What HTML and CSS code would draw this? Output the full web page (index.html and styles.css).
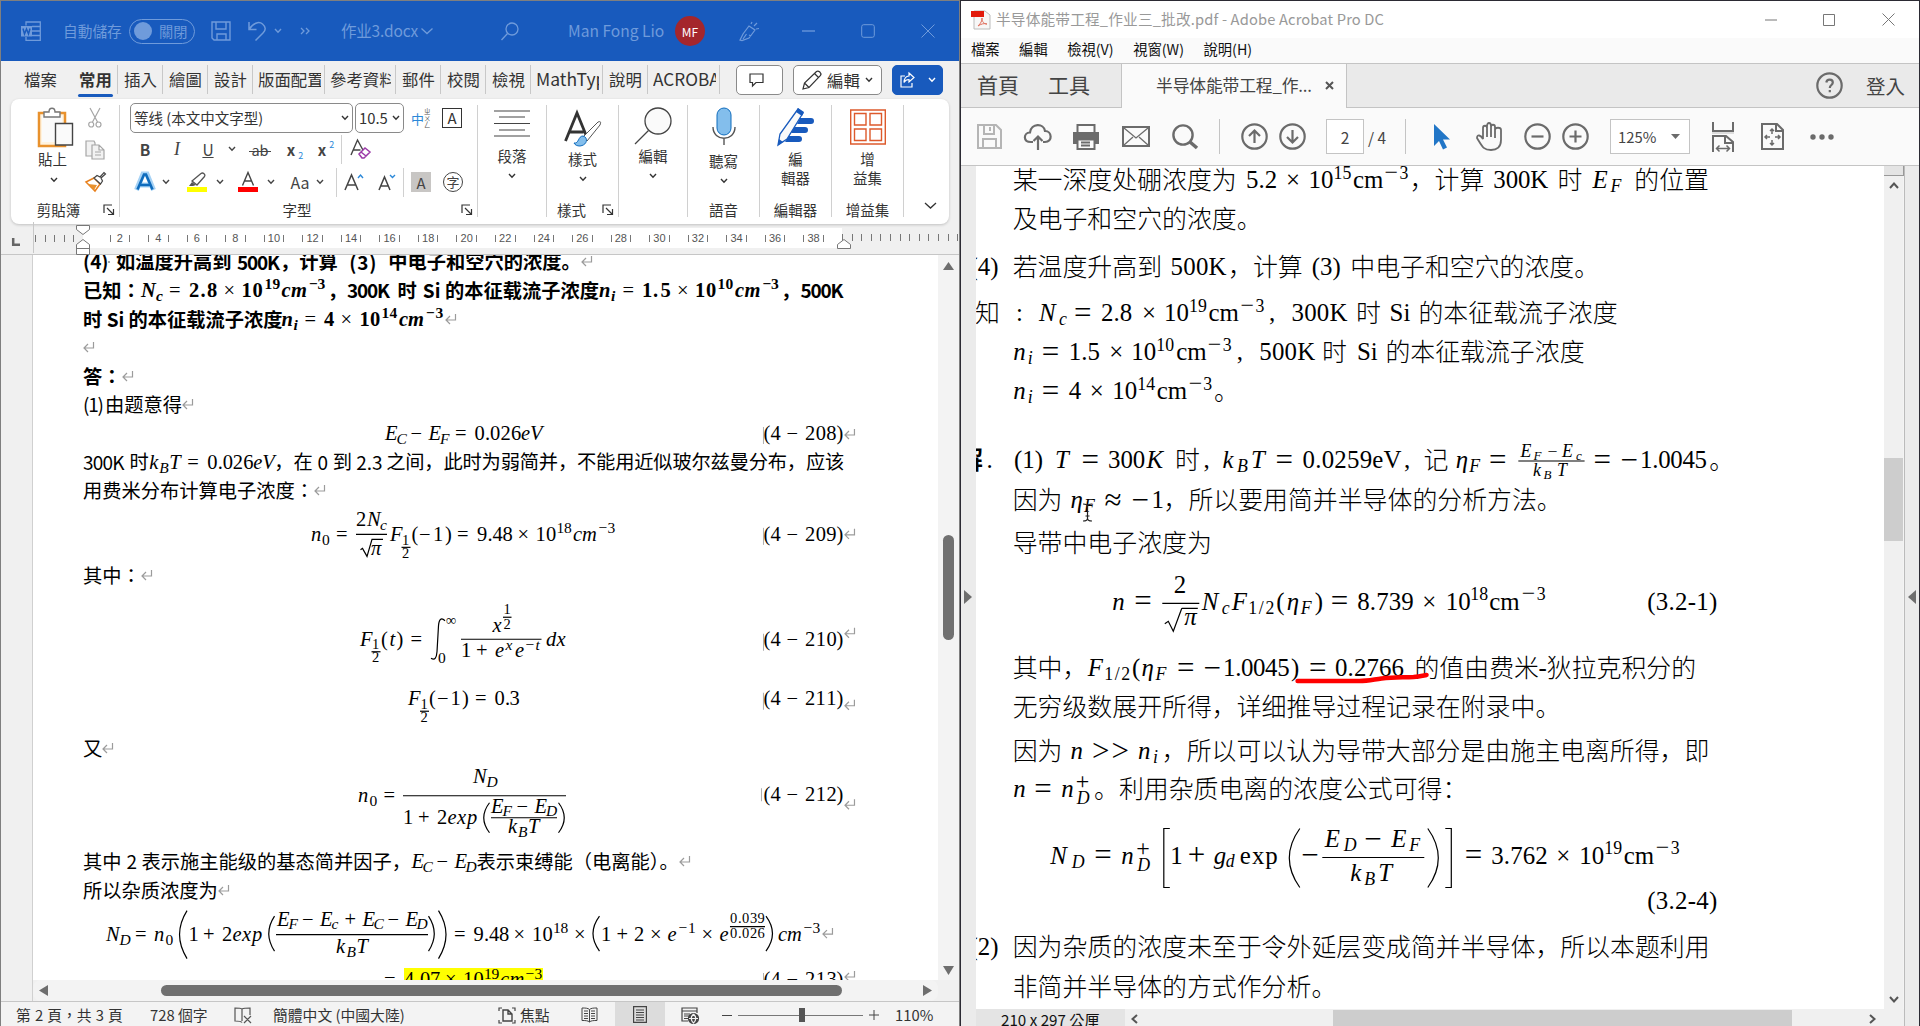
FILE: index.html
```html
<!DOCTYPE html>
<html lang="zh-Hant">
<head>
<meta charset="utf-8">
<title>作业3.docx</title>
<link rel="stylesheet" href="styles.css">
</head>
<body>
<svg class="defs" width="0" height="0">
  <symbol id="ret" viewBox="0 0 12 12"><path d="M10.500 1v6H1.500M5 3L1 7l4 4" fill="none" stroke="#9b9b9b" stroke-width="1.2"/></symbol>
  <symbol id="chev" viewBox="0 0 8 6"><path d="M1 1l3 3.200L7 1" fill="none" stroke="currentColor" stroke-width="1.4"/></symbol>
  <symbol id="launch" viewBox="0 0 12 12"><path d="M1 9V1h8M4 4l6 6M10.500 5v5.500H5" fill="none" stroke="#333" stroke-width="1.2"/></symbol>
</svg>
<div class="desktop">

<section class="word">
  <header class="w-title">
    <svg class="w-logo" width="20" height="20" viewBox="0 0 20 20" fill="none" stroke="currentColor" stroke-width="1.3"><path d="M5 4.500V1h14.300v18.300H5V16M11 5.500h8M11 10h8M11 14.500h8"/><path d="M0 5h11v10.500H0z" fill="currentColor" stroke="none"/><path d="M2 7.500l1.500 5.500 2-5 2 5L9 7.500" stroke="#185abd" stroke-width="1.500"/></svg>
    <span class="autosave">自動儲存</span>
    <span class="toggle"><i></i>關閉</span>
    <svg class="t-save" width="20" height="20" viewBox="0 0 20 20" fill="none" stroke="currentColor" stroke-width="1.4"><path d="M1 1h18v18H3l-2-2zM5 1v7h10V1M6 19v-6h9v6"/></svg>
    <svg class="t-undo" width="20" height="20" viewBox="0 0 20 20" fill="none" stroke="currentColor" stroke-width="1.500"><path d="M2 1v7.500h7.500M2 8.500C6 2 12 0 15.500 3s3.500 6 .5 9l-7.500 7.500"/></svg>
    <svg class="t-c1" width="8" height="6"><use href="#chev"/></svg>
    <svg class="t-more" width="10" height="8" viewBox="0 0 10 8" fill="none" stroke="currentColor" stroke-width="1.3"><path d="M1 1l3 3-3 3M6 1l3 3-3 3"/></svg>
    <span class="docname">作业3.docx</span>
    <svg class="t-c2" width="12" height="8" viewBox="0 0 12 8" fill="none" stroke="currentColor" stroke-width="1.3"><path d="M.500 1.500L6 6.500l5.500-5"/></svg>
    <svg class="t-search" width="18" height="19" viewBox="0 0 18 19" fill="none" stroke="currentColor" stroke-width="1.3"><circle cx="11" cy="7" r="6"/><path d="M6.500 11.500L.500 18"/></svg>
    <span class="user">Man Fong Lio</span>
    <span class="avatar">MF</span>
    <svg class="t-pen" width="21" height="21" viewBox="0 0 21 21" fill="none" stroke="currentColor" stroke-width="1.2"><path d="M1 19l3-6 6-8 6 4-6 8-7 2.500zM4 18l3.500-5M10 14l2 1M12 3l1-2M15 5l3-3M17 8l3-.5"/></svg>
    <svg class="t-min" width="13" height="2"><path d="M0 1h13" stroke="currentColor" stroke-width="1.3"/></svg>
    <svg class="t-max" width="14" height="14" fill="none" stroke="currentColor"><rect x=".7" y=".7" width="12.600" height="12.600" rx="2"/></svg>
    <svg class="t-x" width="14" height="14" fill="none" stroke="currentColor"><path d="M.500.500l13 13M13.500.500l-13 13"/></svg>
  </header>

  <nav class="w-tabs">
    <div class="tab file">檔案</div><div class="tab home"><b>常用</b></div>
    <div class="tab n">插入</div><div class="tab n">繪圖</div><div class="tab n">設計</div>
    <div class="tab wide"><span>版面配置</span></div><div class="tab wide2"><span>參考資料</span></div>
    <div class="tab n">郵件</div><div class="tab n">校閱</div><div class="tab n">檢視</div>
    <div class="tab wide math"><span>MathType</span></div><div class="tab n">說明</div><div class="tab wide acro"><span>ACROBAT</span></div>
    <span class="btn comment"><svg width="15" height="14" viewBox="0 0 15 14" fill="none" stroke="#333" stroke-width="1.2"><path d="M1 1h13v8.500H7L3.500 13V9.500H1z"/></svg></span>
    <span class="btn edit"><svg width="20" height="20" viewBox="0 0 20 20" fill="none" stroke="#333" stroke-width="1.2"><path d="M1 19l1.500-6L14.500 1.500c2-1.500 5.500 1.500 4 4L7 17.500zM12.500 3.500l4 4M2.500 13L7 17.500"/></svg>編輯<svg width="8" height="6"><use href="#chev"/></svg></span>
    <span class="btn share"><svg width="15" height="16" viewBox="0 0 15 16" fill="none" stroke="#fff" stroke-width="1.200"><path d="M5 4H1v11h11v-4M9 1l5 4.500L9 10V7.500c-3 0-4 1-5 3 0-4 2-6.500 5-6.500z"/></svg><svg width="8" height="6"><use href="#chev"/></svg></span>
  </nav>

  <div class="ribbon">
    <div class="g clip">
      <div class="paste"><svg width="36" height="40" viewBox="0 0 36 40"><path d="M2 6h26v33H2z" fill="#fff3df" stroke="#e8912d" stroke-width="2.500"/><path d="M5 9h20v26H5z" fill="#fafafa"/><path d="M7 10V5h5c0-5 6-5 6 0h5v5z" fill="#fff" stroke="#777" stroke-width="1.400"/><path d="M18.500 16.500h17V38h-17z" fill="#fafafa" stroke="#444" stroke-width="1.400"/></svg><span>貼上</span><svg width="8" height="6"><use href="#chev"/></svg></div>
      <div class="clip-tools">
        <svg width="14" height="20" viewBox="0 0 14 20" fill="none" stroke="#a6a6a6" stroke-width="1.200"><path d="M2 0l7.500 14M12 0L4.500 14"/><circle cx="3.200" cy="16.500" r="2.500"/><circle cx="10.500" cy="16.500" r="2.500"/></svg>
        <svg width="20" height="20" viewBox="0 0 20 20" fill="#f2f2f2" stroke="#a6a6a6" stroke-width="1.200"><path d="M7 16H1V1h8l1 2v3"/><path d="M7 5h7l5 5v9H7zM14 5v5h5M10 12h6M10 15h6"/></svg>
        <svg width="21" height="20" viewBox="0 0 21 20"><path d="M1 10l8-4 6 6-5 7z" fill="#fff" stroke="#e8801d" stroke-width="1.500"/><path d="M3 12l9 1-3 5z" fill="#e8912d"/><path d="M9 6l3-2.500 3 1.500 4-4.500 1.500 1.500-4.500 4 1.500 3-2 3z" fill="#fff" stroke="#444" stroke-width="1.200"/></svg>
      </div>
      <div class="cap"><span>剪貼簿</span><svg width="12" height="12"><use href="#launch"/></svg></div>
    </div>
    <div class="g font">
      <div class="r1"><span class="combo name">等线 (本文中文字型)<svg width="8" height="6"><use href="#chev"/></svg></span><span class="combo size">10.5<svg width="8" height="6"><use href="#chev"/></svg></span>
        <span class="pinyin">中<small>ㄓ<br>ㄨ<br>ㄥ</small></span><span class="boxed">A</span></div>
      <div class="r2"><b>B</b><i class="ser">I</i><u>U</u><span><svg width="8" height="6"><use href="#chev"/></svg></span><span class="strike">ab</span><span class="xx"><b>x</b><sub>2</sub></span><span class="xx"><b>x</b><sup>2</sup></span><span class="vr"></span>
        <span><svg width="21" height="20" viewBox="0 0 21 20"><path d="M1 16L7.500 1 14 13M3.500 11h7" fill="none" stroke="#444" stroke-width="1.400"/><path d="M9 15l6-6 5 4-6 6h-2zM11 13l5 4" fill="#fff" stroke="#9b3aa8" stroke-width="1.500"/></svg></span></div>
      <div class="r3">
        <span><svg width="20" height="20" viewBox="0 0 20 20" fill="none"><path d="M1.500 18L8 2h4l6.500 16M5 13h10" stroke="#a6d2f5" stroke-width="5"/><path d="M2.500 17.500L9 2.500h2l6.500 15M5.500 13h9" stroke="#0f6cbd" stroke-width="2.600"/></svg></span>
        <span><svg width="8" height="6"><use href="#chev"/></svg></span>
        <span class="p8"><svg width="20" height="20" viewBox="0 0 20 20"><path d="M2 14l3-4 4 3-3 1z" fill="#555"/><path d="M5 9L14 1.500c2-1.500 5 1 3.500 3L10 13z" fill="none" stroke="#555" stroke-width="1.300"/><path d="M0 15h20v5H0z" fill="#ff0"/></svg></span>
        <span><svg width="8" height="6"><use href="#chev"/></svg></span>
        <span class="p5"><svg width="20" height="20" viewBox="0 0 20 20"><path d="M4.500 13.500L10 .500l5.500 13M6.500 9h7" fill="none" stroke="#444" stroke-width="1.400"/><path d="M0 15h20v5H0z" fill="#f00"/></svg></span>
        <span><svg width="8" height="6"><use href="#chev"/></svg></span>
        <span class="aa">Aa</span>
        <span><svg width="8" height="6"><use href="#chev"/></svg></span>
        <span class="end"><em></em></span>
        <span><svg width="20" height="18" viewBox="0 0 20 18" fill="none"><path d="M1 17L7.500 2 14 17M3.500 12h8" stroke="#444" stroke-width="1.500"/><path d="M14 5l2.500-3L19 5" stroke="#2b88d8" stroke-width="1.400"/></svg></span>
        <span><svg width="18" height="18" viewBox="0 0 18 18" fill="none"><path d="M1 17L6.500 4 12 17M3 13h7" stroke="#444" stroke-width="1.500"/><path d="M12 2l2.500 2.500L17 2" stroke="#2b88d8" stroke-width="1.400"/></svg></span>
        <span class="vr"></span><span class="shade">A</span><span class="circ">字</span></div>
      <div class="cap"><span>字型</span><svg width="12" height="12"><use href="#launch"/></svg></div>
    </div>
    <div class="g para"><svg width="36" height="38" viewBox="0 0 36 38" stroke="#444" stroke-width="1.200"><path d="M0 4h36M5 10h26M0 16.500h36M5 23h26M0 29h36"/></svg><span>段落</span><svg width="8" height="6"><use href="#chev"/></svg></div>
    <div class="g style"><svg width="38" height="40" viewBox="0 0 38 40"><path d="M1.500 34L13 6l9 22M5.500 25h14" fill="none" stroke="#333" stroke-width="2.800"/><path d="M19 30L34 15c3-1 3 0 2 3L23 34z" fill="#fff" stroke="#555"/><path d="M10 36c5 1 4-7 9-7 5 1 5 9-3 10-3 0-5-1-6-3z" fill="#83beec" stroke="#0f6cbd"/></svg><span>樣式</span><svg width="8" height="6"><use href="#chev"/></svg>
      <div class="cap"><span>樣式</span><svg width="12" height="12"><use href="#launch"/></svg></div></div>
    <div class="g find"><svg width="38" height="38" viewBox="0 0 38 38" fill="#fafafa" stroke="#444" stroke-width="1.300"><circle cx="24" cy="14" r="13"/><path d="M14.500 23.500L1 37"/></svg><span>編輯</span><svg width="8" height="6"><use href="#chev"/></svg></div>
    <div class="g voice"><svg width="24" height="40" viewBox="0 0 24 40" fill="none"><rect x="5" y="1" width="14" height="27" rx="7" fill="#83beec" stroke="#0f6cbd"/><path d="M1 20c0 15 22 15 22 0M12 31v7" stroke="#555" stroke-width="1.400"/></svg><span>聽寫</span><svg width="8" height="6"><use href="#chev"/></svg><div class="cap"><span>語音</span></div></div>
    <div class="g editor"><svg width="40" height="40" viewBox="0 0 40 40"><path d="M24 11h11a3 3 0 0 1 0 6H21zM18 20h11a3 3 0 0 1 0 6H15zM13 29h10a3 3 0 0 1 0 6H9z" fill="#185abd"/><path d="M2 38l2-11L22 2l5 4L11 32z" fill="#fafafa" stroke="#185abd" stroke-width="1.300"/><path d="M22 1l6 4-2 4-6-4zM2 38l1-6 4 3z" fill="#185abd"/></svg><span>編</span><span>輯器</span><div class="cap"><span>編輯器</span></div></div>
    <div class="g addin"><svg width="36" height="40" viewBox="0 0 36 40" fill="none" stroke="#dd5a2c" stroke-width="1.400"><path d="M.7 3h34.600v34H.7zM4.500 6.500h11.500v11.500H4.500zM20 6.500h11.500v11.500H20zM4.500 22h11.500v11.500H4.500zM20 22h11.500v11.500H20z"/></svg><span>增</span><span>益集</span><div class="cap"><span>增益集</span></div></div>
    <div class="g last"><svg width="13" height="8" viewBox="0 0 13 8" fill="none" stroke="#333" stroke-width="1.300"><path d="M1 1l5.500 5L12 1"/></svg></div>
  </div>

  <div class="ruler">
    <svg class="tabmark" width="8" height="8"><path d="M1.200 0v6.800H8" fill="none" stroke="#666" stroke-width="2.500"/></svg>
    <div class="rl"></div>
    <div class="rbody"><b>2</b><b>4</b><b>6</b><b>8</b><b>10</b><b>12</b><b>14</b><b>16</b><b>18</b><b>20</b><b>22</b><b>24</b><b>26</b><b>28</b><b>30</b><b>32</b><b>34</b><b>36</b><b>38</b></div>
    <div class="rr"></div>
    <svg class="ind1" width="14" height="30" viewBox="0 0 14 30" fill="#fff" stroke="#777"><path d="M.500.500h13v4L7 9.500.500 4.500zM.500 29.500v-10L7 14.500l6.500 5v10zM.500 23.500h13"/></svg>
    <svg class="ind2" width="14" height="10" viewBox="0 0 14 10" fill="#fff" stroke="#777"><path d="M.500 9.500v-4L7 .500l6.500 5v4z"/></svg>
  </div>

  <div class="w-body">
    <div class="w-gutter"></div>
    <article class="page" lang="zh-Hans">
      <div class="ln bd"><svg class="m" width="33" height="28.550" viewBox="83 0 33 28.550"><text class="sn" x="83" y="22">(4)</text><circle cx="109" cy="15" r="1" fill="#888"/></svg>如温度升高到<svg class="m" width="48.500" height="28.550" viewBox="231.500 0 48.500 28.550"><text class="sn" x="236.500" y="22.800" textLength="43">500K</text></svg>，计算<svg class="m" width="50.500" height="28.550" viewBox="337.800 0 50.500 28.550"><text class="sn" x="349 357 369" y="22.800">(3)</text></svg>中电子和空穴的浓度。<svg class="ret"><use href="#ret"/></svg></div>
      <div class="ln bd">已知<span class="mid" lang="zh-Hant">：</span><svg class="m" width="187" height="28.550" viewBox="141 0 187 28.550"><text class="i" x="141" y="22">N</text><text class="i u" x="156" y="26.500">c</text><text class="nb" x="169" y="22">=</text><text x="189 200.500 207" y="22">2.8</text><text class="nb" x="223.500" y="22">×</text><text x="241.500 252.500" y="22">10</text><text class="u" x="264.500 272.500" y="14">19</text><text class="i" x="281.500 291" y="22">cm</text><text class="u" x="309 317.500" y="14">−3</text></svg>，<svg class="m" width="50.500" height="28.550" viewBox="347 0 50.500 28.550"><text class="sn" x="347" y="22.800" textLength="43">300K</text></svg>时<svg class="m" width="28.300" height="28.550" viewBox="416.700 0 28.300 28.550"><text class="sn" x="422.500" y="22.800">Si</text></svg>的本征载流子浓度<svg class="m" width="182" height="28.550" viewBox="599 0 182 28.550"><text class="i" x="599" y="22">n</text><text class="i u" x="611" y="26.500">i</text><text class="nb" x="622.500" y="22">=</text><text x="642 653 660.500" y="22">1.5</text><text class="nb" x="677" y="22">×</text><text x="695 706" y="22">10</text><text class="u" x="717.500 725.500" y="14">10</text><text class="i" x="735 744.500" y="22">cm</text><text class="u" x="762.500 771" y="14">−3</text></svg>，<svg class="m" width="45" height="28.550" viewBox="800.200 0 45 28.550"><text class="sn" x="800.700" y="22.800" textLength="43">500K</text></svg></div>
      <div class="ln bd">时<svg class="m" width="26.200" height="28.550" viewBox="102.250 0 26.200 28.550"><text class="sn" x="107" y="22.800">Si</text></svg>的本征载流子浓度<svg class="m" width="163" height="28.550" viewBox="282.400 0 163 28.550"><text class="i" x="282" y="22">n</text><text class="i u" x="294" y="26.500">i</text><text class="nb" x="305" y="22">=</text><text x="324.500" y="22">4</text><text class="nb" x="341" y="22">×</text><text x="360 370.500" y="22">10</text><text class="u" x="382 390" y="14">14</text><text class="i" x="399.500 408.500" y="22">cm</text><text class="u" x="426.500 436" y="14">−3</text></svg><svg class="ret"><use href="#ret"/></svg></div>
      <div class="ln"><svg class="ret"><use href="#ret"/></svg></div>
      <div class="ln bd">答<span class="mid" lang="zh-Hant">：</span><svg class="ret"><use href="#ret"/></svg></div>
      <div class="ln"><svg class="m" width="22" height="28.550" viewBox="83 0 22 28.550"><text class="sn" x="83" y="22" textLength="21">(1)</text></svg>由题意得<svg class="ret"><use href="#ret"/></svg></div>
      <div class="ln"><svg class="m" width="797" height="28.550" viewBox="83 0 797 28.550"><text class="i" x="385" y="22">E</text><text class="i u" x="396.500" y="26">C</text><text x="410.500" y="22">−</text><text class="i" x="428.500" y="22">E</text><text class="i u" x="440" y="26">F</text><text x="455" y="22">=</text><text x="474.500 485 490 500.500 511" y="22">0.026</text><text class="i" x="521 530" y="22">eV</text><path class="gm" d="M763.500 9v17"/><text x="763.500 770.500 786.500 805 815.700 826.400 836.500" y="22">(4−208)</text><use href="#ret" x="844" y="10" width="12" height="12"/></svg></div>
      <div class="ln"><svg class="m" width="46.500" height="28.550" viewBox="83 0 46.500 28.550"><text class="sn" x="83" y="22.800" textLength="41.500">300K</text></svg>时<svg class="m" width="125.400" height="28.550" viewBox="148.700 0 125.400 28.550"><text class="i" x="149" y="22">k</text><text class="i u" x="159" y="26">B</text><text class="i" x="169" y="22">T</text><text x="187" y="22">=</text><text x="207 217.500 222.500 232.500 243" y="22">0.026</text><text class="i" x="253 262" y="22">eV</text></svg>，在<svg class="m" width="20" height="28.550" viewBox="312.500 0 20 28.550"><text class="sn" x="317" y="22.800">0</text></svg>到<svg class="m" width="34.300" height="28.550" viewBox="351.800 0 34.300 28.550"><text class="sn" x="356" y="22.800">2.3</text></svg><span class="tight">之间，此时为弱简并，不能用近似玻尔兹曼分布，应该</span></div>
      <div class="ln">用费米分布计算电子浓度<span class="mid" lang="zh-Hant">：</span><svg class="ret"><use href="#ret"/></svg></div>
      <svg class="m" viewBox="83 503.150 797 56.550"><text class="i" x="311" y="541">n</text><text class="u" x="322" y="545">0</text><text x="336" y="541">=</text><text x="356" y="526">2</text><text class="i" x="367" y="526">N</text><text class="i u" x="380" y="530">c</text><path d="M356 534.500h31M360.500 550l2-1.500 4.500 8 5-17h11"/><text class="i" x="371" y="555.500">π</text><text class="i" x="390" y="541">F</text><text class="v" x="402" y="545">1</text><path d="M401.500 547.500h9"/><text class="v" x="402" y="558">2</text><text x="411.500 419 433 445" y="541">(−1)</text><text x="457" y="541">=</text><text x="477 487.500 492.500 502.500" y="541">9.48</text><text x="517.500" y="541">×</text><text x="535.500 546" y="541">10</text><text class="u" x="556.500 564" y="533">18</text><text class="i" x="573 582" y="541">cm</text><text class="u" x="598.500 607.500" y="533">−3</text><path class="gm" d="M763.500 528v17"/><text x="763.500 770.500 786.500 805 815.700 826.400 836.500" y="541">(4−209)</text><use href="#ret" x="844" y="528" width="12" height="12"/></svg>
      <div class="ln">其中<span class="mid" lang="zh-Hant">：</span><svg class="ret"><use href="#ret"/></svg></div>
      <svg class="m" viewBox="83 588.250 797 85"><text class="i" x="360" y="646">F</text><text class="v" x="372" y="649.500">1</text><path d="M371.500 652h9"/><text class="v" x="372" y="662.500">2</text><text x="381" y="646">(</text><text class="i" x="389.500" y="646">t</text><text x="396.500" y="646">)</text><text x="410.500" y="646">=</text><path class="cv" d="M445 621c-4-4-6-1-6.500 5l-1.500 26c-.500 6-2 9-6 6.500"/><text class="v" x="446" y="625">∞</text><text class="u" x="438" y="663.500">0</text><path d="M461 639.500h80.500"/><text class="i" x="492.500" y="632">x</text><text class="v" x="503.500" y="614.500">1</text><path d="M503 617.500h8.500"/><text class="v" x="503.500" y="629">2</text><text x="461 476" y="657.500">1+</text><text class="i" x="495" y="657.500">e</text><text class="i u" x="505.500" y="650.500">x</text><text class="i" x="515" y="657.500">e</text><text class="u" x="525.500" y="650.500">−</text><text class="i u" x="535.500" y="650.500">t</text><text class="i" x="546 556.500" y="646">dx</text><path class="gm" d="M763.500 634v17"/><text x="763.500 770.500 786.500 805 815.700 826.400 836.500" y="646">(4−210)</text><use href="#ret" x="844" y="627" width="12" height="12"/></svg>
      <svg class="m" viewBox="83 673.250 797 58.950"><text class="i" x="408" y="705.500">F</text><text class="v" x="420.500" y="709">1</text><path d="M420 711.500h9"/><text class="v" x="420.500" y="722">2</text><text x="429 437 450.500 462" y="705.500">(−1)</text><text x="475" y="705.500">=</text><text x="494.500 505 509.500" y="705.500">0.3</text><path class="gm" d="M763.500 693v17"/><text x="763.500 770.500 786.500 805 815.700 826.400 836.500" y="705.500">(4−211)</text><use href="#ret" x="844" y="699" width="12" height="12"/></svg>
      <div class="ln">又<svg class="ret"><use href="#ret"/></svg></div>
      <svg class="m" viewBox="83 760.750 797 85.050"><text class="i" x="358" y="803">n</text><text class="u" x="369.500" y="807">0</text><text x="383.500" y="803">=</text><path d="M403 796.500h163"/><text class="i" x="473" y="783.500">N</text><text class="i u" x="486.500" y="787.500">D</text><text x="403 418 437" y="824.500">1+2</text><text class="i" x="447.500 457 467" y="824.500">exp</text><path class="cv" d="M489.500 803.500q-11.500 15 0 30M558.500 803.500q11.500 15 0 30"/><text class="i" x="491" y="813.500">E</text><text class="i u" x="502.500" y="817">F</text><text x="516.500" y="813.500">−</text><text class="i" x="534.500" y="813.500">E</text><text class="i u" x="546" y="817">D</text><path d="M491 818.500h66"/><text class="i" x="508" y="834">k</text><text class="i u" x="518" y="838">B</text><text class="i" x="528" y="834">T</text><path class="gm" d="M761.500 789v13"/><text x="763.500 770.500 786.500 805 815.700 826.400 836.500" y="802">(4−212)</text><use href="#ret" x="844" y="799" width="12" height="12"/></svg>
      <div class="ln">其中<svg class="m" width="20" height="28.550" viewBox="121.500 0 20 28.550"><text class="sn" x="126" y="22.800">2</text></svg>表示施主能级的基态简并因子，<svg class="m" width="65.500" height="28.550" viewBox="411 0 65.500 28.550"><text class="i" x="411.500" y="22">E</text><text class="i u" x="422.500" y="26">C</text><text x="436.500" y="22">−</text><text class="i" x="454.500" y="22">E</text><text class="i u" x="465.500" y="26">D</text></svg>表示束缚能（电离能<span class="half">）</span>。<svg class="ret"><use href="#ret"/></svg></div>
      <div class="ln">所以杂质浓度为<svg class="ret"><use href="#ret"/></svg></div>
      <svg class="m" viewBox="83 902.900 797 60.100"><text class="i" x="106" y="941.500">N</text><text class="i u" x="119.500" y="945.500">D</text><text x="135" y="941.500">=</text><text class="i" x="154" y="941.500">n</text><text class="u" x="165.500" y="945.500">0</text><path class="cv" d="M187 911.500q-15 24 0 48M438.500 911.500q15 24 0 48"/><text x="188.500 203 222" y="941.500">1+2</text><text class="i" x="232.500 242 252" y="941.500">exp</text><path class="cv" d="M274.500 917q-11.500 17.500 0 35M428.500 917q11.500 17.500 0 35"/><text class="i" x="277" y="926.500">E</text><text class="i u" x="288.500" y="930">F</text><text x="302" y="926.500">−</text><text class="i" x="320" y="926.500">E</text><text class="i u" x="331.500" y="930">c</text><text x="344.500" y="926.500">+</text><text class="i" x="362.500" y="926.500">E</text><text class="i u" x="373.500" y="930">C</text><text x="387.500" y="926.500">−</text><text class="i" x="405.500" y="926.500">E</text><text class="i u" x="416.500" y="930">D</text><path d="M276 935.500h152"/><text class="i" x="336" y="954">k</text><text class="i u" x="346.500" y="958">B</text><text class="i" x="356.500" y="954">T</text><text x="454" y="941.500">=</text><text x="473.500 484 489 499" y="941.500">9.48</text><text x="513.500" y="941.500">×</text><text x="532 542.500" y="941.500">10</text><text class="u" x="553 560.500" y="934">18</text><text x="574" y="941.500">×</text><path class="cv" d="M599.500 917q-13 17.500 0 35M766 917q13 17.500 0 35"/><text x="601 616.500 634 650" y="941.500">1+2×</text><text class="i" x="667.500" y="941.500">e</text><text class="u" x="678.500 688" y="934">−1</text><text x="701.500" y="941.500">×</text><text class="i" x="719.500" y="941.500">e</text><text class="v" x="730 738 742 750 757.500" y="924">0.039</text><path d="M730 927.500h35"/><text class="v" x="730 738 742 750 757.500" y="939">0.026</text><text class="i" x="778 787" y="941.500">cm</text><text class="u" x="803.500 812.500" y="934">−3</text><use href="#ret" x="822" y="928" width="12" height="12"/></svg>
      <svg class="m" viewBox="83 963 797 24"><path d="M404 969h139v18H404z" class="hl"/><text x="384" y="988">=</text><text x="404 415 420 430" y="987">4.07</text><text x="445" y="987">×</text><text x="463 473.500" y="987">10</text><text class="u" x="484 491.500" y="979.500">19</text><text class="i" x="500 509.500" y="987">cm</text><text class="u" x="525.500 534.500" y="979.500">−3</text><path class="gm" d="M763.500 974v10"/><text x="763.500 770.500 786.500 805 815.700 826.400 836.500" y="987">(4−213)</text><use href="#ret" x="844" y="971" width="12" height="12"/></svg>
    </article>
    <div class="vbar"><svg width="11" height="8"><path d="M5.500 0L11 8H0z" fill="#6e6e6e"/></svg><i></i><svg width="11" height="9"><path d="M5.500 9L11 0H0z" fill="#6e6e6e"/></svg></div>
  </div>
  <div class="hbar"><div class="w-gutter"></div><div class="htrack"><svg width="9" height="11"><path d="M0 5.500L9 0v11z" fill="#6e6e6e"/></svg><i></i><svg width="9" height="11"><path d="M9 5.500L0 0v11z" fill="#6e6e6e"/></svg></div></div>
  <footer class="status">
    <span class="s1">第 2 頁，共 3 頁</span><span class="s2">728 個字</span>
    <svg class="s3" width="18" height="17" viewBox="0 0 18 17" fill="none" stroke="#555" stroke-width="1.200"><path d="M8 14V2C7 1 3 1 1 1v13c3 0 6 0 7 1.500M8 2c2-1 5-1 8-1v7M10 9l7 7M17 9l-7 7"/></svg>
    <span class="s4">簡體中文 (中國大陸)</span>
    <svg class="s5" width="18" height="17" viewBox="0 0 18 17" fill="none" stroke="#444" stroke-width="1.200"><path d="M4 1H1v3M14 1h3v3M4 16H1v-3M14 16h3v-3"/><path d="M5 3h5l4 4v7H5zM10 3v4h4" stroke-width="1.400"/></svg><span class="s6">焦點</span>
    <svg class="s7" width="17" height="16" viewBox="0 0 17 16" fill="none" stroke="#444"><path d="M8.500 2.500C7 1 4 1 1 1v12.500c3 0 6 0 7.500 1.500 1.500-1.500 4.500-1.500 7.500-1.500V1c-3 0-6 0-7.500 1.500zV15M3 4h4M3 6.500h4M3 9h4M3 11.500h4M10 4h4M10 6.500h4M10 9h4M10 11.500h4"/></svg>
    <span class="sel"><svg width="14" height="17" viewBox="0 0 14 17" fill="none" stroke="#444" stroke-width="1.200"><path d="M.6.600h12.800v15.800H.6zM3 4h8M3 6.500h8M3 9h8M3 11.500h8M3 14h8"/></svg></span>
    <svg class="s8" width="18" height="17" viewBox="0 0 18 17" fill="none" stroke="#444" stroke-width="1.200"><path d="M7 14H1V1h15v5M1 4h15M3 7h6M3 9h5M3 11.500h4"/><circle cx="12.500" cy="11.500" r="5" fill="#444"/><path d="M8 11.500h9M12.500 7c-3 3-3 6 0 9 3-3 3-6 0-9" stroke="#f3f3f3"/></svg>
    <span class="minus"></span><span class="slider"><i></i></span><svg class="plus" width="10" height="10"><path d="M0 5h10M5 0v10" stroke="#444"/></svg><span class="zoom">110%</span>
  </footer>
</section>

<section class="pdf">
  <header class="p-title"><svg width="20" height="20" viewBox="0 0 20 20"><path d="M3 1h11l5 4v14H3z" fill="#f7f7f7" stroke="#bbb"/><path d="M0 1h13v6H0z" fill="#e21b0c"/><path d="M7 16c3-3 4-5 4-8 0 4 2 6 5 6-3-1-6 0-9 2z" fill="none" stroke="#e0705f"/></svg><span>半导体能带工程_作业三_批改.pdf - Adobe Acrobat Pro DC</span>
    <svg class="wmin" width="12" height="2"><path d="M0 1h12" stroke="#777"/></svg><svg class="wmax" width="12" height="12"><path d="M.500.500h11v11H.500z" fill="none" stroke="#777"/></svg><svg class="wx" width="13" height="13"><path d="M.500.500l12 12M12.500.500l-12 12" stroke="#777"/></svg></header>
  <nav class="p-menu"><span>檔案</span><span>編輯</span><span>檢視(V)</span><span>視窗(W)</span><span>說明(H)</span></nav>
  <div class="p-tabs"><div class="left"><span>首頁</span><span>工具</span></div><div class="active"><span>半导体能带工程_作...</span><svg width="9" height="9" viewBox="0 0 9 9"><path d="M1 1l7 7M8 1L1 8" stroke="#555" stroke-width="2"/></svg></div><div class="right"><svg width="27" height="27" viewBox="0 0 27 27" fill="none" stroke="#6b6b6b" stroke-width="2.200"><circle cx="13.500" cy="13.500" r="12.200"/><path d="M10.300 10.500c.5-4 6.500-3.500 6.500 0 0 2.500-3 2.500-3 5.500M13.800 18v2.300"/></svg><span>登入</span></div></div>
  <div class="p-tools">
    <svg width="25" height="25" viewBox="0 0 25 25" fill="none" stroke="#b5b5b5" stroke-width="2"><path d="M1 1h18l5 5v18H1zM7 1v9h10V1M13 3v4M6 24v-9h13v9"/></svg>
    <svg class="a2" width="28" height="26" viewBox="0 0 28 26" fill="none" stroke="#6b6b6b" stroke-width="2.200"><path d="M9 18H7C-1 18-1 9 6 8.500 7-1 20-1 21 7c7 0 8 11 0 11h-2M14 26V13M9.500 17L14 12.500 18.500 17"/></svg>
    <svg class="a3" width="28" height="26" viewBox="0 0 28 26"><path d="M1 8h26v12h-4v-4H5v4H1z" fill="#6b6b6b"/><path d="M5.500 9V1h17v8M5.500 15.500h17V25h-17zM9 18.500h9M9 21.500h9" fill="none" stroke="#6b6b6b" stroke-width="2"/></svg>
    <svg class="a4" width="28" height="21" viewBox="0 0 28 21" fill="none" stroke="#6b6b6b"><path d="M1 1h26v19H1z" stroke-width="2"/><path d="M2 2l12 10L26 2M2 19l9-8M26 19l-9-8" stroke-width="1.300"/></svg>
    <svg class="a5" width="26" height="25" viewBox="0 0 26 25" fill="none" stroke="#6b6b6b"><circle cx="11" cy="11" r="9.600" stroke-width="2.400"/><path d="M18 18l7 6" stroke-width="3.500"/></svg>
    <i class="bar b1"></i>
    <svg class="a6" width="27" height="27" viewBox="0 0 27 27" fill="none" stroke="#6b6b6b" stroke-width="2.200"><circle cx="13.500" cy="13.500" r="12.200"/><path d="M13.500 20V7.500M8 13l5.500-5.500L19 13"/></svg>
    <svg class="a7" width="27" height="27" viewBox="0 0 27 27" fill="none" stroke="#6b6b6b" stroke-width="2.200"><circle cx="13.500" cy="13.500" r="12.200"/><path d="M13.500 7v12.500M8 14l5.500 5.500L19 14"/></svg>
    <span class="pg">2</span><span class="of">/ 4</span><i class="bar b2"></i>
    <svg class="a8" width="16" height="26" viewBox="0 0 16 26"><path d="M0 0v22l5-5 4 8.500 4-2-4-8h7z" fill="#2176c7"/></svg>
    <svg class="a9" width="28" height="29" viewBox="0 0 28 29" fill="none" stroke="#6b6b6b" stroke-width="1.800"><path d="M8 17V6c0-3 4-3 4 0v9V4c0-4 4-4 4 0v11V5c0-3 4-3 4 0v11V8c0-3 6-3 6 0v10c0 7-4 10-10 10-8 0-9-4-14-12 0-4 4-3 6 1z"/></svg>
    <svg class="a10" width="27" height="27" viewBox="0 0 27 27" fill="none" stroke="#6b6b6b" stroke-width="2.200"><circle cx="13.500" cy="13.500" r="12.200"/><path d="M7.500 13.500h12"/></svg>
    <svg class="a11" width="27" height="27" viewBox="0 0 27 27" fill="none" stroke="#6b6b6b" stroke-width="2.200"><circle cx="13.500" cy="13.500" r="12.200"/><path d="M7.500 13.500h12M13.500 7.500v12"/></svg>
    <span class="pct">125%<svg width="9" height="5"><path d="M0 0h9L4.500 5z" fill="#6b6b6b"/></svg></span>
    <svg class="a12" width="22" height="30" viewBox="0 0 22 30" fill="none" stroke="#6b6b6b" stroke-width="2"><path d="M1 0v9h20V0M1 30V14h13l7 6v10M13 14v7h8"/><path d="M4 26.500h14M7.500 23.500l-3 3 3 3M14.500 23.500l3 3-3 3" stroke-width="1.500"/><path d="M0 11h22" stroke="#ddd"/></svg>
    <svg class="a13" width="23" height="27" viewBox="0 0 23 27" fill="none" stroke="#6b6b6b" stroke-width="2"><path d="M1 1h15l6 6v19H1zM15 1v7h7"/><path d="M11 6v5M11 17v5M3.500 14H9M14 14h5M9 8l2-2 2 2M9 20l2 2 2-2M6 12l-2 2 2 2M17 12l2 2-2 2" stroke-width="1.500"/></svg>
    <svg class="a14" width="24" height="6" fill="#6b6b6b"><circle cx="3" cy="3" r="2.700"/><circle cx="12" cy="3" r="2.700"/><circle cx="21" cy="3" r="2.700"/></svg>
  </div>
  <div class="p-body">
    <div class="rail"><svg width="8" height="14"><path d="M0 0l8 7-8 7z" fill="#6e6e6e"/></svg></div>
    <div class="p-main">
      <div class="p-view">
        <article class="paper" lang="zh-Hans">
          <div class="pl">某一深度处硼浓度为<svg class="m" width="173" height="39.200" viewBox="1237 0 173 39.200"><text x="1246" y="30.500">5.2</text><text x="1286" y="30.500">×</text><text x="1308.500" y="30.500">10</text><text class="u" x="1333.500" y="21">15</text><text x="1353" y="30.500">cm</text><text class="mu" x="1384.500" y="22">−</text><text class="u" x="1399.500" y="21">3</text></svg>，计算<svg class="m" width="73" height="39.200" viewBox="1484.700 0 73 39.200"><text x="1494" y="30.500" textLength="55">300K</text></svg>时<svg class="m" width="52" height="39.200" viewBox="1582.600 0 52 39.200"><text class="i" x="1593" y="30.500">E</text><text class="i u" x="1611" y="34">F</text></svg>的位置</div>
          <div class="pl">及电子和空穴的浓度。</div>
          <div class="pl flush"><svg class="m" width="36.700" height="39.200" viewBox="976 0 36.700 39.200"><text x="969.500" y="30.500">(4)</text></svg>若温度升高到<svg class="m" width="66" height="39.200" viewBox="1162.100 0 66 39.200"><text x="1170.700" y="30.500" textLength="56">500K</text></svg>，计算<svg class="m" width="47.500" height="39.200" viewBox="1302.800 0 47.500 39.200"><text x="1311.500" y="30.500">(3)</text></svg>中电子和空穴的浓度。</div>
          <div class="pl flush"><span class="cut1">知</span><svg class="m" width="356" height="39.200" viewBox="999 0 356 39.200"><text x="1015" y="30.500">:</text><text class="i" x="1038" y="30.500">N</text><text class="i u" x="1058" y="34">c</text><text class="op" x="1073" y="32">=</text><text x="1100" y="30.500">2.8</text><text x="1141" y="30.500">×</text><text x="1163" y="30.500">10</text><text class="u" x="1188" y="21">19</text><text x="1207.500" y="30.500">cm</text><text class="mu" x="1239.500" y="22">−</text><text class="u" x="1254.500" y="21">3</text><text x="1268" y="30.500">,</text><text x="1290.500" y="30.500" textLength="56">300K</text></svg>时<svg class="m" width="37.600" height="39.200" viewBox="1379.900 0 37.600 39.200"><text x="1388.500" y="30.500">Si</text></svg>的本征载流子浓度</div>
          <div class="pl"><svg class="m" width="309.300" height="39.200" viewBox="1012.700 0 309.300 39.200"><text class="i" x="1013" y="30.500">n</text><text class="i u" x="1027.500" y="34">i</text><text class="op" x="1041.500" y="32">=</text><text x="1068.500" y="30.500">1.5</text><text x="1109" y="30.500">×</text><text x="1131" y="30.500">10</text><text class="u" x="1156" y="21">10</text><text x="1176" y="30.500">cm</text><text class="mu" x="1207.500" y="22">−</text><text class="u" x="1222.500" y="21">3</text><text x="1236.500" y="30.500">,</text><text x="1259" y="30.500" textLength="56">500K</text></svg>时<svg class="m" width="38.500" height="39.200" viewBox="1347 0 38.500 39.200"><text x="1357" y="30.500">Si</text></svg>的本征载流子浓度</div>
          <div class="pl"><svg class="m" width="201.300" height="39.200" viewBox="1012.700 0 201.300 39.200"><text class="i" x="1013" y="30.500">n</text><text class="i u" x="1027.500" y="34">i</text><text class="op" x="1041.500" y="32">=</text><text x="1068.500" y="30.500">4</text><text x="1089.500" y="30.500">×</text><text x="1112" y="30.500">10</text><text class="u" x="1137" y="21">14</text><text x="1156.500" y="30.500">cm</text><text class="mu" x="1188.500" y="22">−</text><text class="u" x="1203" y="21">3</text></svg>。</div>
          <div class="pl flush"><span class="cut2">解</span><svg class="m" width="192" height="39.200" viewBox="983 0 192 39.200"><text x="986.500" y="30.500">.</text><text x="1014" y="30.500">(1)</text><text class="i" x="1055" y="30.500">T</text><text class="op" x="1081.500" y="32">=</text><text x="1108" y="30.500">300</text><text class="i" x="1146.500" y="30.500">K</text></svg>时<svg class="m" width="223.600" height="39.200" viewBox="1199.900 0 223.600 39.200"><text x="1203.500" y="30.500">,</text><text class="i" x="1222.500" y="30.500">k</text><text class="i u" x="1237" y="34">B</text><text class="i" x="1251" y="30.500">T</text><text class="op" x="1275.500" y="32">=</text><text x="1302.500" y="30.500" textLength="99">0.0259eV</text><text x="1404" y="30.500">,</text></svg>记<svg class="m" width="261" height="39.200" viewBox="1448.400 0 261 39.200"><text class="i" x="1456" y="30.500">η</text><text class="i u" x="1469.500" y="34">F</text><text class="op" x="1489.500" y="32">=</text><path d="M1518.700 23h66.300"/><text class="i u" x="1521" y="19.500">E</text><text class="i w" x="1534" y="22">F</text><text class="u" x="1548" y="19.500">−</text><text class="i u" x="1562.500" y="19.500">E</text><text class="i w" x="1576.500" y="22">c</text><text class="i u" x="1533.500" y="38.500">k</text><text class="i w" x="1544" y="41">B</text><text class="i u" x="1557.500" y="38.500">T</text><text class="op" x="1594" y="32">=</text><text class="op" x="1621" y="32">−</text><text x="1640.500" y="30.500" textLength="67">1.0045</text></svg>。</div>
          <div class="pl">因为<svg class="m" width="101" height="39.200" viewBox="1062.500 0 101 39.200"><text class="i" x="1071" y="30.500">η</text><text class="i u" x="1084.500" y="34">F</text><text class="op" x="1105" y="32">≈</text><text class="op" x="1132" y="32">−</text><text x="1152" y="30.500">1</text><path class="beam" d="M1083.500 26q4.500 0 4.500 2.500 0-2.500 4.500-2.500M1088 28.500v13M1083.500 43q4.500 0 4.500-2.500 0 2.500 4.500 2.500M1086 38h4"/></svg>，所以要用简并半导体的分析方法。</div>
          <div class="pl">导带中电子浓度为</div>
          <svg class="m" viewBox="1012.700 559.200 720 86"><text class="i" x="1112" y="610">n</text><text class="op" x="1134" y="611.500">=</text><text x="1173.500" y="593">2</text><path d="M1162 603.500h37M1181.500 608.500h16"/><path class="cv" d="M1164.500 624l3.500-2.500 5 10 8.500-23"/><text class="i" x="1184" y="625.500">π</text><text class="i" x="1201.500" y="610">N</text><text class="i u" x="1221.500" y="614">c</text><text class="i" x="1231.500" y="610">F</text><text class="u" x="1248" y="614" textLength="26">1/2</text><text x="1276" y="610">(</text><text class="i" x="1286.500" y="610">η</text><text class="i u" x="1300.500" y="614">F</text><text x="1314.500" y="610">)</text><text class="op" x="1330.500" y="611.500">=</text><text x="1357" y="610" textLength="56.500">8.739</text><text x="1422" y="610">×</text><text x="1445.500" y="610">10</text><text class="u" x="1470" y="600">18</text><text x="1489" y="610">cm</text><text class="mu" x="1521.500" y="601.500">−</text><text class="u" x="1536.500" y="600">3</text><text x="1647" y="610" textLength="70">(3.2-1)</text></svg>
          <div class="pl">其中，<svg class="m over" width="327.100" height="39.200" viewBox="1087.400 0 327.100 39.200"><text class="i" x="1088" y="30.500">F</text><text class="u" x="1104.500" y="34.500" textLength="26">1/2</text><text x="1132.500" y="30.500">(</text><text class="i" x="1142" y="30.500">η</text><text class="i u" x="1156" y="34.500">F</text><text class="op" x="1177.500" y="32">=</text><text class="op" x="1204" y="32">−</text><text x="1223.500" y="30.500" textLength="66.500">1.0045</text><text x="1291.500" y="30.500">)</text><text class="op" x="1309.500" y="32">=</text><text x="1335.500" y="30.500" textLength="69">0.2766</text><path class="red" d="M1298 35h62c8 0 14-1.500 22-2.500 12-1.500 20-1 32-1.500 6-.5 10-1.500 13-2"/></svg>的值由费米<svg class="m" width="7.800" height="39.200" viewBox="1539 0 7.800 39.200"><text x="1538.500" y="30.500">-</text></svg>狄拉克积分的</div>
          <div class="pl">无穷级数展开所得，详细推导过程记录在附录中。</div>
          <div class="pl">因为<svg class="m" width="99.300" height="39.200" viewBox="1062.500 0 99.300 39.200"><text class="i" x="1071" y="30.500">n</text><text class="op" x="1092.500 1112" y="32">&gt;&gt;</text><text class="i" x="1138.500" y="30.500">n</text><text class="i u" x="1153.500" y="34">i</text></svg>，所以可以认为导带大部分是由施主电离所得，即</div>
          <div class="pl"><svg class="m" width="81.300" height="39.200" viewBox="1012.700 0 81.300 39.200"><text class="i" x="1013" y="30.500">n</text><text class="op" x="1034" y="32">=</text><text class="i" x="1061" y="30.500">n</text><text class="i u" x="1076.500" y="37.500">D</text><text class="mu" x="1075.500" y="22.500">+</text></svg>。利用杂质电离的浓度公式可得：</div>
          <svg class="m" viewBox="1012.700 805 720 72.800"><text class="i" x="1050" y="863.800">N</text><text class="i u" x="1071.500" y="868">D</text><text class="op" x="1094" y="865.500">=</text><text class="i" x="1121" y="863.800">n</text><text class="i u" x="1137" y="871">D</text><text class="mu" x="1136" y="856">+</text><path d="M1169.500 828.500h-6v59h6M1445 828.500h6v59h-6M1322 857.500h102"/><text x="1170" y="863.800">1</text><text class="op" x="1187.500" y="865.500">+</text><text class="i" x="1213.500" y="863.800">g</text><text class="i u" x="1225.500" y="867">d</text><text x="1239.500" y="863.800" textLength="38">exp</text><path class="cv" d="M1299.500 828.500q-21 29.500 0 59M1427.500 828.500q21 29.500 0 59"/><text class="op" x="1301" y="865.500">−</text><text class="i" x="1324.500" y="847.300">E</text><text class="i u" x="1343.500" y="851">D</text><text class="op" x="1364" y="849">−</text><text class="i" x="1391" y="847.300">E</text><text class="i u" x="1409" y="851">F</text><text class="i" x="1350" y="881">k</text><text class="i u" x="1364" y="885">B</text><text class="i" x="1378" y="881">T</text><text class="op" x="1464.500" y="865.500">=</text><text x="1491" y="863.800" textLength="56.500">3.762</text><text x="1556" y="863.800">×</text><text x="1579" y="863.800">10</text><text class="u" x="1604" y="854">19</text><text x="1623.500" y="863.800">cm</text><text class="mu" x="1655.500" y="855">−</text><text class="u" x="1670.500" y="854">3</text></svg>
          <div class="pl"><svg class="m" width="710" height="39.200" viewBox="1012.700 0 710 39.200"><text x="1647" y="30.500" textLength="70">(3.2-4)</text></svg></div>
          <div class="pl flush"><svg class="m" width="36.700" height="39.200" viewBox="976 0 36.700 39.200"><text x="969.500" y="30.500">(2)</text></svg>因为杂质的浓度未至于令外延层变成简并半导体，所以本题利用</div>
          <div class="pl">非简并半导体的方式作分析。</div>
        </article>
        <div class="p-vbar"><div class="split"></div><svg width="10" height="7"><path d="M1 6l4-4.500L9 6" fill="none" stroke="#555" stroke-width="2"/></svg><i></i><svg width="10" height="7"><path d="M1 1l4 4.500L9 1" fill="none" stroke="#555" stroke-width="2"/></svg></div>
      </div>
      <div class="p-hbar"><span class="dim">210 x 297 公厘</span><div class="track"><svg width="7" height="10"><path d="M6 1L1.500 5 6 9" fill="none" stroke="#555" stroke-width="2"/></svg><i></i><svg width="7" height="10"><path d="M1 1l4.500 4L1 9" fill="none" stroke="#555" stroke-width="2"/></svg></div></div>
    </div>
    <div class="rail r"><svg width="8" height="14"><path d="M8 0L0 7l8 7z" fill="#6e6e6e"/></svg></div>
  </div>
</section>
</div>
</body>
</html>
```
FILE: styles.css
```css
* { box-sizing: border-box; }
body { margin: 0; overflow: hidden; font-family: "Noto Sans CJK TC", "Open Sans", sans-serif; }
svg { display: block; flex: none; overflow: visible; }
.defs { position: absolute; }
i, em { font-style: normal; }
.desktop { display: flex; width: 1920px; height: 1026px; background: #2b2a33; overflow: hidden; }

/* ---------- Word window ---------- */
.word { width: 960px; height: 1026px; border: 1px solid #7f7f7f; border-bottom: 0; background: #f0f0f0; display: flex; flex-direction: column; color: #333; position: relative; }
.w-title { height: 60px; background: #185abd; color: #6f9bdb; display: flex; align-items: center; font-size: 14.700px; white-space: nowrap; flex: none; }
.w-title > * { flex: none; }
.w-logo { margin-left: 20px; }
.autosave { margin-left: 22px; width: 66px; margin-top: -2px; }
.toggle { width: 66px; height: 25px; border: 1px solid #6f9bdb; border-radius: 13px; display: flex; align-items: center; padding-left: 4px; gap: 7px; font-size: 14.200px; }
.toggle i { width: 18px; height: 18px; border-radius: 50%; background: #6f9bdb; }
.t-save { margin-left: 16px; }
.t-undo { margin-left: 16px; }
.t-c1 { margin-left: 7px; }
.t-more { margin-left: 18px; }
.docname { margin-left: 31px; width: 76px; font-size: 15.500px; letter-spacing: -.2px; margin-top: -2px; }
.t-c2 { margin-left: 4px; }
.t-search { margin-left: 68px; }
.user { margin-left: 49px; width: 96px; font-size: 15.600px; margin-top: -2px; }
.avatar { margin-left: 11px; width: 30px; height: 30px; border-radius: 50%; background: #a4262c; color: #fff; font-size: 12px; display: grid; place-items: center; }
.t-pen { margin-left: 34px; }
.t-min { margin-left: 42px; }
.t-max { margin-left: 46px; }
.t-x { margin-left: 46px; }

.w-tabs { height: 37px; display: flex; padding-top: 4px; font-size: 16.400px; flex: none; white-space: nowrap; }
.tab { height: 29px; line-height: 28px; border-right: 1px solid #c8c8c8; padding-left: 6px; }
.tab span { display: block; overflow: hidden; }
.tab.file { width: 72px; padding-left: 23px; border: 0; }
.tab.home { width: 45px; padding-left: 6px; position: relative; }
.tab.home::after { content: ""; position: absolute; left: 5px; bottom: -3px; width: 35px; height: 3px; border-radius: 2px; background: #185abd; }
.tab.n { width: 45px; }
.tab.wide { width: 72px; padding-left: 5px; }
.tab.wide span { width: 63px; }
.tab.wide2 { width: 71px; padding-left: 5px; }
.tab.wide2 span { width: 61px; }
.tab.math { font-size: 17.500px; }
.tab.acro { font-size: 17.200px; }
.btn { height: 30px; border: 1px solid #8a8a8a; border-radius: 5px; background: #fff; display: flex; align-items: center; justify-content: center; line-height: 26px; }
.btn.comment { width: 47px; margin-left: 16px; padding-right: 6px; }
.btn.edit { width: 89px; margin-left: 10px; gap: 5px; }
.btn.share { width: 51px; margin-left: 10px; gap: 13px; background: #185abd; border-color: #185abd; color: #fff; }

.ribbon { height: 125px; width: 938px; margin: 1px 0 0 10px; background: #fff; border-radius: 8px; box-shadow: 0 1px 3px #0003; display: flex; font-size: 14.500px; flex: none; padding-top: 6px; }
.g { height: 112px; border-right: 1px solid #d0d0d0; position: relative; display: flex; flex-direction: column; align-items: center; line-height: 19px; }
.cap { position: absolute; left: 0; right: 0; bottom: -2px; height: 19px; display: flex; justify-content: center; }
.cap svg { position: absolute; right: 4px; top: 4px; }
.clip { width: 109px; flex-direction: row; align-items: flex-start; }
.clip .cap span { margin-right: 22px; margin-left: 9px; }
.paste { width: 85px; display: flex; flex-direction: column; align-items: center; padding-top: 2px; }
.paste svg:first-child { margin-left: 2px; }
.paste span { margin-top: 2px; margin-left: -2px; }
.paste svg:last-child { margin-top: 9px; }
.clip-tools { width: 24px; display: flex; flex-direction: column; align-items: center; gap: 12px; margin-left: -13px; padding-top: 3px; }
.font { width: 358px; display: block; padding-left: 10px; }
.font .cap span { margin-right: 22px; margin-left: 19px; }
.r1 { display: flex; align-items: center; margin-top: -2px; height: 30px; gap: 2px; }
.combo { height: 30px; border: 1px solid #8a8a8a; border-radius: 5px; display: flex; align-items: center; justify-content: space-between; padding: 0 3px 1px; }
.combo.name { width: 223px; }
.combo.size { width: 49px; font-size: 14.800px; }
.pinyin { display: flex; align-items: center; color: #2b88d8; margin-left: 5px; width: 21px; font-size: 13px; }
.pinyin small { font-size: 6.500px; line-height: 6.500px; color: #555; }
.boxed { margin-left: 8px; width: 20px; height: 20px; border: 1.500px solid #333; display: grid; place-items: center; font-size: 15px; line-height: 16px; }
.r2, .r3 { display: grid; align-items: center; justify-items: center; color: #444; }
.r2 { height: 30px; margin-top: 1px; grid-template-columns: 30px 34px 28px 20px 36px 34px 28px 2px 36px; font-size: 15.500px; }
.r2 .ser { font-family: "Liberation Serif", serif; font-style: italic; font-size: 18px; }
.strike { position: relative; font-size: 14.500px; }
.strike::after { content: ""; position: absolute; left: -2px; right: -2px; top: 11px; height: 1px; background: #444; }
.xx { position: relative; padding-right: 8px; font-size: 15px; }
.xx sub, .xx sup { position: absolute; right: 0; font-size: 9px; color: #2b88d8; line-height: 10px; }
.xx sub { bottom: -2px; } .xx sup { top: 0; }
.r3 { height: 30px; margin-top: 3px; grid-template-columns: 29px 14px 40px 14px 37px 14px 35px 14px 10px 34px 32px 1px 34px 30px; }
.vr { width: 1px; height: 29px; background: #d0d0d0; }
.p8 { padding-left: 8px; } .p5 { padding-left: 5px; }
.aa { padding-left: 9px; font-size: 16px; }
.end { justify-self: end; } .end em { display: block; width: 1px; height: 29px; background: #d0d0d0; }
.shade { width: 20px; height: 20px; background: #c8c6c4; display: grid; place-items: center; font-size: 15px; }
.circ { width: 20px; height: 20px; border: 1.300px solid #444; border-radius: 50%; display: grid; place-items: center; font-size: 13px; line-height: 14px; }
.para { width: 69px; } .para > span { margin-top: 1px; }
.para > span + svg { margin-top: 8px; }
.para > svg:first-child { margin-top: 2px; }
.style { width: 72px; } .style > span { margin-top: 2px; } .style > svg:first-child { margin-top: 2px; }
.style > span + svg { margin-top: 8px; } .style .cap span { margin-right: 22px; }
.find { width: 69px; } .find > span { margin-top: 1px; } .find > svg:first-child { margin-top: 2px; }
.find > span + svg { margin-top: 8px; }
.voice { width: 72px; } .voice > span { margin-top: 4px; } .voice > svg:first-child { margin-top: 2px; }
.voice > span + svg { margin-top: 8px; }
.editor, .addin { width: 72px; } .editor > svg, .addin > svg { margin: 2px 0 2px; }
.last { flex: 1; border: 0; justify-content: flex-end; padding-bottom: 7px; padding-left: 8px; }

.ruler { height: 31px; display: flex; align-items: center; position: relative; flex: none; border-bottom: 1px solid #c6c6c6; padding: 0 0 3px 11px; }
.tabmark { margin: 9px 13px 0 0; }
.rl { width: 50px; height: 31px; border-left: 1px solid #c8c8c8; margin: 0; background: repeating-linear-gradient(90deg, #777 0 1px, transparent 1px 9.600px) 1px 13px / 42px 7px no-repeat; }
.rbody { width: 759px; height: 20px; background: #fff; display: flex; padding-left: 17.500px; position: relative; margin-top: 1px; }
.rbody b { width: 38.550px; flex: none; font: 11px/22px "Liberation Sans", sans-serif; color: #555; display: flex; justify-content: space-between; align-items: center; padding: 0 9px; }
.rbody b::before, .rbody b::after { content: ""; width: 1px; height: 7px; background: #777; }
.rr { flex: 1; height: 7px; background: repeating-linear-gradient(90deg, #777 0 1px, transparent 1px 9.600px); }
.ind1 { position: absolute; left: 75px; top: 1px; z-index: 2; }
.ind2 { position: absolute; left: 836px; top: 15px; }

.w-body { display: flex; height: 725px; flex: none; }
.w-gutter { width: 32px; border-right: 1px solid #d0d0d0; flex: none; }
.page { width: 905px; height: 725px; background: #fff; overflow: hidden; padding-left: 50px; color: #000; font: 19.250px/32px "Noto Sans CJK SC", sans-serif; display: grid; grid-template-rows: 19.150px repeat(8, 28.550px) 56.550px 28.550px 85px 58.950px 28.550px 85.050px 28.550px 28.550px 60.100px 24px; grid-template-columns: 797px; align-content: start; }
.page > :first-child { margin-top: -9.800px; }
.ln { display: flex; white-space: pre; align-items: flex-start; height: 28.550px; }
.ln > * { flex: none; }
.ln > .m { margin-top: 1.300px; }
.bd { font-weight: 700; }
.mid { font-family: "Noto Sans CJK TC", sans-serif; }
.half { margin-right: -9.600px; }
.tight { letter-spacing: -.17px; }
.ret { width: 12px; height: 12px; margin-top: 10px; }
.page > .m { width: 797px; height: 100%; }
.m text { font-family: "Liberation Serif", serif; font-size: 20.500px; fill: #000; font-weight: inherit; white-space: pre; }
.m .i { font-style: italic; }
.m path { fill: none; stroke: #000; stroke-width: 1.200; }
.page .u { font-size: 15.500px; }
.page .v { font-size: 14.500px; }
.page .nb { font-weight: 400; }
.page .sn { font-family: "Noto Sans CJK SC", sans-serif; font-size: 19px; }
.page .gm { stroke: #999; stroke-width: .8; }
.page .hl { fill: #ff0; stroke: none; }
.vbar { width: 21px; background: #f3f3f3; display: flex; flex-direction: column; align-items: center; padding: 7px 0 5px; }
.vbar i { width: 11px; height: 105px; border-radius: 6px; background: #707070; margin: 265px 0 auto; }
.hbar { display: flex; height: 21px; flex: none; }
.htrack { width: 905px; background: #f3f3f3; display: flex; align-items: center; padding: 0 6px; justify-content: space-between; border-radius: 8px; }
.htrack i { width: 681px; height: 11px; border-radius: 6px; background: #707070; margin-left: 32px; }
.status { height: 25px; border-top: 1px solid #c6c6c6; background: #f3f3f3; display: flex; align-items: center; padding-top: 2px; font-size: 14.800px; line-height: 20px; white-space: nowrap; flex: none; }
.status > * { flex: none; }
.s1 { margin-left: 15px; width: 134px; word-spacing: .8px; } .s2 { width: 84px; } .s4 { margin-left: 21px; width: 225px; }
.s6 { margin-left: 4px; width: 61px; }
.sel { margin-left: 17px; width: 50px; height: 25px; background: #dcdcdc; display: grid; place-items: center; margin-top: -2px; }
.s8 { margin-left: 16px; }
.minus { margin-left: 23px; width: 10px; height: 1px; background: #444; }
.slider { margin-left: 6px; width: 125px; height: 1px; background: #777; position: relative; }
.slider i { position: absolute; left: 61px; top: -7px; width: 6px; height: 14px; background: #555; }
.plus { margin-left: 6px; }
.zoom { margin-left: 16px; }

/* ---------- Acrobat window ---------- */
.pdf { width: 958px; height: 1025px; margin: 1px 0 0 1px; background: #fafafa; display: flex; flex-direction: column; }
.p-title { height: 37px; background: #fff; color: #999; display: flex; align-items: center; padding-left: 10px; font-size: 14.700px; white-space: nowrap; flex: none; }
.p-title > span { margin: -2px 0 0 5px; width: 392px; letter-spacing: .15px; }
.wmin { margin-left: auto; } .wmax { margin-left: 46px; } .wx { margin: 0 24px 0 47px; }
.p-menu { height: 25px; display: flex; color: #111; font-size: 14.300px; line-height: 22px; padding-left: 10px; gap: 19.500px; flex: none; white-space: nowrap; }
.p-tabs { height: 45px; display: flex; border-top: 1px solid #c4c4c4; background: #eaeaea; flex: none; white-space: nowrap; color: #444; }
.p-tabs > div { border-bottom: 1px solid #c4c4c4; display: flex; align-items: center; }
.p-tabs .left { width: 161px; padding: 0 0 4px 16px; gap: 29px; font-size: 21px; border-right: 1px solid #c4c4c4; }
.p-tabs .active { width: 225px; background: #fafafa; border: 0; border-right: 1px solid #c4c4c4; padding: 0 0 2px 34px; font-size: 16.800px; }
.p-tabs .active span { width: 155px; letter-spacing: -.15px; }
.p-tabs .active svg { margin-left: 14px; }
.p-tabs .right { flex: 1; justify-content: flex-end; padding-right: 14px; gap: 23px; font-size: 19.500px; }
.p-tools { height: 58px; display: flex; align-items: center; padding-left: 16px; border-bottom: 1px solid #c4c4c4; flex: none; color: #444; }
.p-tools > * { flex: none; }
.a2 { margin-left: 22px; } .a3 { margin-left: 20px; } .a4 { margin-left: 22px; } .a5 { margin-left: 22px; }
.bar { width: 1px; height: 35px; background: #c4c4c4; } .b1 { margin-left: 21px; }
.a6 { margin-left: 21px; } .a7 { margin-left: 11px; }
.pg { margin-left: 20px; width: 38px; height: 35px; border: 1px solid #c4c4c4; background: #fff; display: grid; place-items: center; font-size: 15.500px; }
.of { margin-left: 4px; width: 37px; font-size: 15.500px; }
.a8 { margin-left: 28px; } .a9 { margin-left: 25px; } .a10 { margin-left: 21px; } .a11 { margin-left: 11px; }
.pct { margin-left: 21px; width: 80px; height: 35px; border: 1px solid #c4c4c4; background: #fff; display: flex; align-items: center; justify-content: space-between; padding: 0 9px 0 7px; font-size: 14.800px; }
.a12 { margin-left: 22px; } .a13 { margin-left: 27px; } .a14 { margin-left: 26px; }
.p-body { display: flex; height: 860px; flex: none; }
.rail { width: 15px; background: #ebebeb; padding: 424px 0 0 3px; flex: none; }
.rail.r { width: 15px; border-left: 1px solid #bbb; }
.p-main { width: 928px; flex: none; }
.p-view { display: flex; height: 843px; background: #fff; overflow: hidden; }
.paper { width: 908px; height: 843px; overflow: hidden; color: #000; font: 300 24.900px/42.800px "Noto Sans CJK SC", sans-serif; display: grid; grid-template-columns: 908px; grid-template-rows: 29.500px 48.700px 46px 39.300px 38.700px 69px 39.600px 43.200px 39.200px 86px 39.300px 43.300px 38px 39.200px 72.800px 46.700px 40px 44.200px; align-content: start; }
.paper > :first-child { margin-top: -9.500px; }
.pl { display: flex; white-space: pre; align-items: flex-start; padding-left: 36.700px; height: 39.200px; }
.pl > * { flex: none; }
.pl > .m { margin-top: 1px; }
.pl.flush { padding-left: 0; }
.cut1 { margin-left: -1px; } .cut2 { margin-left: -18px; font-weight: 700; }
.paper > .m { width: 720px; height: 100%; margin-left: 36.700px; }
.paper .m text { font-size: 24.900px; }
.paper .m .u { font-size: 17.800px; }
.paper .m .w { font-size: 13px; }
.paper .m .op { font-size: 31px; }
.paper .m .mu { font-size: 24px; }
.paper .m .beam { stroke: #222; }
.paper .m .red { stroke: #f00; stroke-width: 4.500; stroke-linecap: round; }
.over { position: relative; }
.p-vbar { width: 20px; background: #f0f0f0; display: flex; flex-direction: column; align-items: center; padding-bottom: 6px; border-right: 1px solid #f4f4f4; }
.split { width: 20px; height: 10px; background: #e4e4e4; border: 1px solid #999; border-width: 0 1px 1px 0; margin-bottom: 6px; flex: none; }
.p-vbar i { width: 19px; height: 83px; background: #cdcdcd; margin: 269px 0 auto; }
.p-hbar { display: flex; height: 17px; background: #f0f0f0; overflow: hidden; }
.dim { width: 149px; background: #e4e4e4; padding-left: 25px; font-size: 15.200px; line-height: 20px; color: #111; white-space: nowrap; }
.track { width: 759px; display: flex; align-items: center; justify-content: space-between; padding: 2px 8px 0 6px; position: relative; }
.track i { width: 459px; height: 17px; margin-left: 118px; background: #cdcdcd; }
```
